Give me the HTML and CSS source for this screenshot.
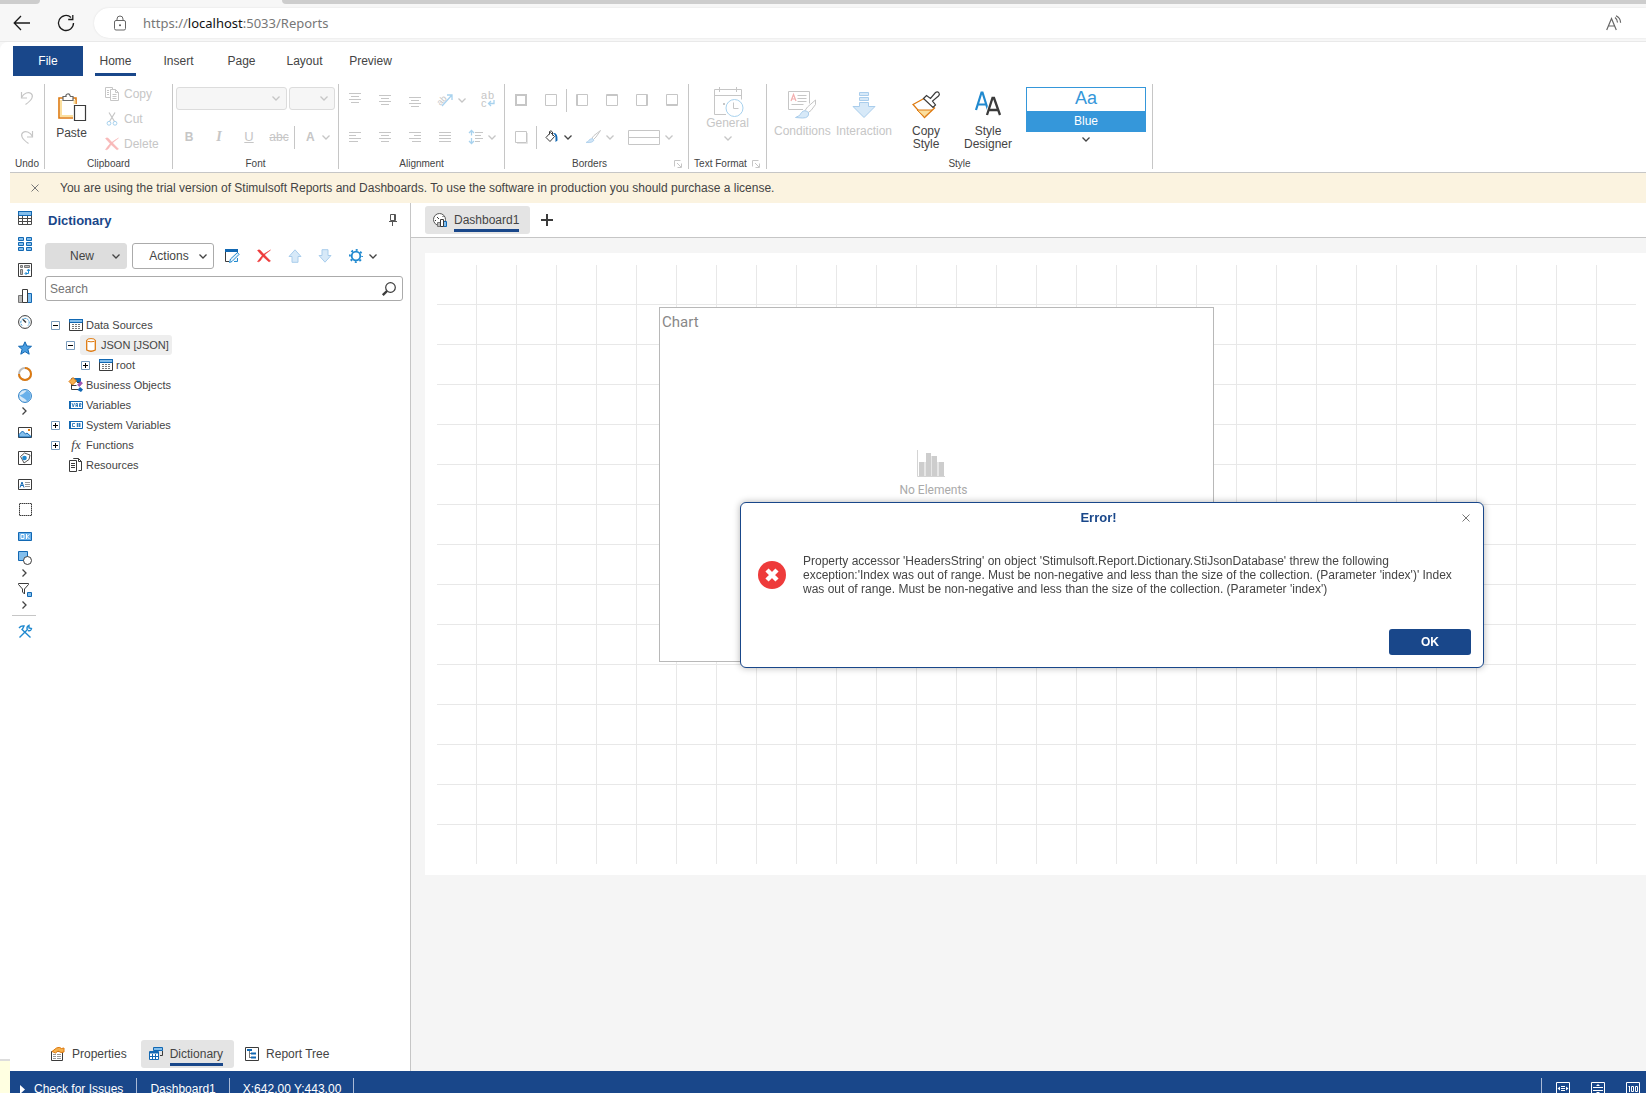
FILE: index.html
```html
<!DOCTYPE html>
<html lang="en">
<head>
<meta charset="utf-8">
<title>Reports</title>
<link rel="stylesheet" href="styles.css">
</head>
<body>
<svg class="sprite" aria-hidden="true">
  <symbol id="chev" viewBox="0 0 8 5"><path d="M.5.5 4 4 7.5.5" fill="none" stroke="currentColor" stroke-width="1.3"/></symbol>
  <symbol id="chev-r" viewBox="0 0 5 8"><path d="M.5.5 4 4 .5 7.5" fill="none" stroke="currentColor" stroke-width="1.3"/></symbol>
  <symbol id="launch" viewBox="0 0 8 8"><path d="M.5 6.500V.5h6M3 3l4 4M7.500 3.500v4h-4" fill="none" stroke="currentColor"/></symbol>
  <symbol id="lines-c" viewBox="0 0 14 14"><path d="M1 2.500h12M3 5.500h8M1 8.500h12M3 11.500h8" stroke="currentColor"/></symbol>
  <symbol id="lines-l" viewBox="0 0 14 14"><path d="M1 2.500h12M1 5.500h7M1 8.500h12M1 11.500h9" stroke="currentColor"/></symbol>
  <symbol id="lines-r" viewBox="0 0 14 14"><path d="M1 2.500h12M6 5.500h7M1 8.500h12M4 11.500h9" stroke="currentColor"/></symbol>
  <symbol id="lines-j" viewBox="0 0 14 14"><path d="M1 2.500h12M1 5.500h12M1 8.500h12M1 11.500h12" stroke="currentColor"/></symbol>
  <symbol id="minus" viewBox="0 0 9 9"><path d="M.5.5h8v8h-8z" fill="#fff" stroke="#7a9cbd"/><path d="M2 4.500h5" stroke="#000"/></symbol>
  <symbol id="plus" viewBox="0 0 9 9"><path d="M.5.5h8v8h-8z" fill="#fff" stroke="#7a9cbd"/><path d="M2 4.500h5M4.500 2v5" stroke="#000"/></symbol>
  <symbol id="table" viewBox="0 0 14 12"><path d="M0 0h14v4H0z" fill="#1268b3"/><path d="M1 1h12v2H1z" fill="#83beec"/><path d="M.5 3.500v8h13v-8" fill="none" stroke="#3b3b3b"/><path d="M3 5.500h8M3 7.500h8M3 9.500h8" stroke="#777" stroke-dasharray="2 1"/></symbol>
  <symbol id="cross" viewBox="0 0 14 14"><path d="M.5 1.500Q2 0 3.500 1.500 6 4.500 13.500 12q-1 1-2 .5Q5 7 .5 1.500z" fill="currentColor" stroke="currentColor" stroke-width=".5"/><path d="M13.500 1Q7 5 3.500 11.500 1.500 13.500.5 12.500 5 5 13.500 1z" fill="currentColor" stroke="currentColor" stroke-width=".5"/></symbol>
  <symbol id="arrow" viewBox="0 0 14 14"><path d="M7 .8 13 7.500h-3v5.800H4V7.500H1z" fill="#d7e9f8" stroke="#a9cdec"/></symbol>
</svg>

<header class="browser">
  <div class="tabstrip"><i class="tab-left"></i><i class="tab-right"></i></div>
  <div class="navbar">
    <button class="nav-btn" aria-label="Back"><svg width="18" height="16" viewBox="0 0 18 16"><path d="M17 8H1.500M8 1 1.200 8 8 15" fill="none" stroke="#1b1b1b" stroke-width="1.300"/></svg></button>
    <button class="nav-btn" aria-label="Refresh"><svg width="18" height="18" viewBox="0 0 18 18"><path d="M16.500 9A7.500 7.500 0 1 1 14 3.400M15.800 1v4.500h-4.600" fill="none" stroke="#1b1b1b" stroke-width="1.300"/></svg></button>
    <div class="address">
      <svg width="14" height="16" viewBox="0 0 14 16"><rect x="1.500" y="5.500" width="11" height="9.500" rx="1.500" fill="none" stroke="#666"/><path d="M4 5.500V4a3 3 0 0 1 6 0v1.500" fill="none" stroke="#666"/><circle cx="7" cy="10.300" r="1" fill="#555"/></svg>
      <span class="url">https://<b>localhost</b>:5033/Reports</span>
      <button class="read" aria-label="Read aloud"><svg width="16" height="16" viewBox="0 0 16 16"><path d="M.7 15 5.500 3.500 10.300 15M2.300 11h6.500M9 2.500a6 6 0 0 1 2.500 5M10 .7a8 8 0 0 1 4.600 7" fill="none" stroke="#666" stroke-width="1.200"/></svg></button>
    </div>
  </div>
</header>

<div class="frame">
<div class="gutter"><i></i></div>
<div class="app">

<nav class="menu">
  <button class="file">File</button>
  <button class="menu-tab on"><span>Home</span></button>
  <button class="menu-tab"><span>Insert</span></button>
  <button class="menu-tab"><span>Page</span></button>
  <button class="menu-tab"><span>Layout</span></button>
  <button class="menu-tab"><span>Preview</span></button>
</nav>

<div class="ribbon">
  <section class="group g-undo">
    <div class="rows">
      <div class="row mid"><button class="off" aria-label="Undo"><svg width="14" height="16" viewBox="0 0 14 16"><path d="M1.500 2v6h5.500M1.500 7.500C4 3 8.500 1.500 11 3.500s2 6-5.500 11" fill="none" stroke="currentColor" stroke-width="1.200"/></svg></button></div>
      <div class="row mid"><button class="off" aria-label="Redo"><svg width="14" height="16" viewBox="0 0 14 16"><path d="M12.500 2v6H7M12.500 7.500C10 3 5.500 1.500 3 3.500s-2 6 5.500 11" fill="none" stroke="currentColor" stroke-width="1.200"/></svg></button></div>
    </div>
    <h2>Undo</h2>
  </section>

  <section class="group g-clip">
    <div class="clip">
      <button class="big paste"><svg width="28" height="28" viewBox="0 0 28 28"><path d="M1 5h17v20H1z" fill="#fff" stroke="#de7a10" stroke-width="1.600"/><path d="M3 7v16H15M16.500 7v4" fill="none" stroke="#fbdf9e" stroke-width="2"/><path d="M5 7.500V3.500h3a2 2 0 0 1 4-1l.5 1H15v4z" fill="#fff" stroke="#666" stroke-width="1.200"/><path d="M15 11h13v17H15z" fill="#fff"/><path d="M16.500 12.500h11v15h-11z" fill="#fff" stroke="#3b3b3b" stroke-width="1.200"/></svg>Paste</button>
      <div class="clip-list">
        <button class="line off"><svg width="14" height="14" viewBox="0 0 14 14"><path d="M5.500 10.500h-5V.5h7v2M5.500 2.500h5l3 3v8h-8zM10.500 2.500v3h3M2 3.500h2M2 5.500h2M2 7.500h2M7.500 7.500h4M7.500 9.500h4M7.500 11.500h4" fill="none" stroke="currentColor"/></svg>Copy</button>
        <button class="line off"><svg width="14" height="14" viewBox="0 0 14 14"><path d="M4 .5 9.500 9.500M10 .5 4.500 9.500" stroke="currentColor" fill="none" stroke-width="1.200"/><circle cx="4" cy="11.300" r="1.900" fill="none" stroke="#a8d2ee"/><circle cx="10" cy="11.300" r="1.900" fill="none" stroke="#a8d2ee"/></svg>Cut</button>
        <button class="line off"><svg class="pink" width="14" height="14"><use href="#cross"/></svg>Delete</button>
      </div>
    </div>
    <h2>Clipboard</h2>
  </section>

  <section class="group g-font">
    <div class="rows">
      <div class="row combos"><button class="combo wide off" aria-label="Font name"><svg width="8" height="5"><use href="#chev"/></svg></button><button class="combo off" aria-label="Font size"><svg width="8" height="5"><use href="#chev"/></svg></button></div>
      <div class="row cells"><button class="cell off fb">B</button><button class="cell off fi">I</button><button class="cell off fu">U</button><button class="cell off fs">abc</button><i class="vline"></i><button class="duo off fa">A<svg width="8" height="5"><use href="#chev"/></svg></button></div>
    </div>
    <h2>Font</h2>
  </section>

  <section class="group g-align">
    <div class="rows">
      <div class="row cells">
        <button class="cell off up" aria-label="Align top"><svg width="14" height="14"><use href="#lines-c"/></svg></button>
        <button class="cell off" aria-label="Align middle"><svg width="14" height="14"><use href="#lines-c"/></svg></button>
        <button class="cell off down" aria-label="Align bottom"><svg width="14" height="14"><use href="#lines-c"/></svg></button>
        <button class="duo off" aria-label="Angle"><svg width="15" height="14" viewBox="0 0 15 14"><path d="M4 13 13.500 2.500M9 2h5v5" fill="none" stroke="#a8d2ee" stroke-width="1.300"/><text x="-1" y="11" transform="rotate(-45 3 8)" font-size="9" fill="currentColor">ab</text></svg><svg width="8" height="5"><use href="#chev"/></svg></button>
        <button class="cell off wrap" aria-label="Wrap text"><svg width="14" height="16" viewBox="0 0 14 16"><text x="0" y="7" font-size="11" fill="currentColor">a</text><text x="7" y="7" font-size="11" fill="currentColor">b</text><text x="0" y="15" font-size="11" fill="currentColor">c</text><path d="M13 8v3.500H7.500M10 9l-2.500 2.500L10 14" fill="none" stroke="#a8d2ee" stroke-width="1.300"/></svg></button>
      </div>
      <div class="row cells">
        <button class="cell off" aria-label="Left"><svg width="14" height="14"><use href="#lines-l"/></svg></button>
        <button class="cell off" aria-label="Center"><svg width="14" height="14"><use href="#lines-c"/></svg></button>
        <button class="cell off" aria-label="Right"><svg width="14" height="14"><use href="#lines-r"/></svg></button>
        <button class="cell off" aria-label="Justify"><svg width="14" height="14"><use href="#lines-j"/></svg></button>
        <button class="duo off" aria-label="Line spacing"><svg width="15" height="14" viewBox="0 0 15 14"><path d="M3.500 1v4.500M3.500 8v5M1 3l2.500-2.500L6 3M1 11l2.500 2.500L6 11" fill="none" stroke="#a8d2ee" stroke-width="1.300"/><path d="M7 2.500h8M7 5.500h6M7 8.500h8M7 11.500h5" stroke="currentColor"/></svg><svg width="8" height="5"><use href="#chev"/></svg></button>
      </div>
    </div>
    <h2>Alignment</h2>
  </section>

  <section class="group g-border">
    <div class="rows">
      <div class="row cells">
        <button class="cell off" aria-label="All borders"><svg width="12" height="12"><path d="M1 1h10v10H1z" fill="none" stroke="currentColor" stroke-width="2"/></svg></button>
        <button class="cell off" aria-label="No borders"><svg width="12" height="12"><path d="M.5.5h11v11H.5z" fill="none" stroke="currentColor"/></svg></button>
        <i class="vline"></i>
        <button class="cell off" aria-label="Left border"><svg width="12" height="12"><path d="M.5.5h11v11H.5zM1.500 0v12" fill="none" stroke="currentColor"/></svg></button>
        <button class="cell off" aria-label="Top border"><svg width="12" height="12"><path d="M.5.5h11v11H.5zM0 1.500h12" fill="none" stroke="currentColor"/></svg></button>
        <button class="cell off" aria-label="Right border"><svg width="12" height="12"><path d="M.5.5h11v11H.5zM10.500 0v12" fill="none" stroke="currentColor"/></svg></button>
        <button class="cell off" aria-label="Bottom border"><svg width="12" height="12"><path d="M.5.5h11v11H.5zM0 10.500h12" fill="none" stroke="currentColor"/></svg></button>
      </div>
      <div class="row cells">
        <button class="cell off" aria-label="Shadow"><svg width="12" height="12"><path d="M2 12.500h10.500V2" fill="none" stroke="#e4e4e4"/><path d="M.5.5h11v11H.5z" fill="none" stroke="currentColor"/></svg></button>
        <i class="vline"></i>
        <button class="duo" aria-label="Fill"><svg width="14" height="14" viewBox="0 0 14 14"><path d="M5.500 2.500 9.500 6.500 5 11.500 1 7.500zM4.500 4.500V1.500L6 .8 7.500 2v3.500" fill="none" stroke="#3b3b3b"/><path d="M8 3q5-1 4.500 7.500L10.500 12V7q0-2-2.500-4z" fill="#1268b3"/></svg><svg width="8" height="5"><use href="#chev"/></svg></button>
        <button class="duo off" aria-label="Border color"><svg width="15" height="14" viewBox="0 0 15 14"><path d="M14.500.5 8 5.500 6 8l1.500 1.500L10 7z" fill="none" stroke="currentColor"/><path d="M0 12.500q3-1 3.500-3 3-2 4.500.5-1 3-8 2.500z" fill="#d0e5f7" stroke="#b4d4ee"/></svg><svg width="8" height="5"><use href="#chev"/></svg></button>
        <button class="duo off" aria-label="Border style"><svg width="32" height="15"><path d="M.5.5h31v14H.5z" fill="none" stroke="currentColor"/><path d="M0 7.500h32" stroke="currentColor"/></svg><svg width="8" height="5"><use href="#chev"/></svg></button>
      </div>
    </div>
    <h2><span>Borders</span><svg class="faint" width="8" height="8"><use href="#launch"/></svg></h2>
  </section>

  <section class="group g-format">
    <button class="big format off"><svg width="30" height="30" viewBox="0 0 30 30"><path d="M13 27.500H1.500v-25H28.500v10M1.500 8.500h27M6.500 0v5M23.500 0v5" fill="none" stroke="currentColor"/><path d="M10 16h2v2h-2z" fill="currentColor"/><circle cx="21.500" cy="21" r="8.500" fill="#fff" stroke="#a8d2ee"/><path d="M20.500 15.500v6h5" fill="none" stroke="currentColor"/></svg>General<svg width="8" height="5"><use href="#chev"/></svg></button>
    <h2><span>Text Format</span><svg class="faint" width="8" height="8"><use href="#launch"/></svg></h2>
  </section>

  <section class="group g-style">
    <div class="styles">
      <button class="big off"><svg width="28" height="28" viewBox="0 0 28 28"><path d="M15 18.500H.5V.5h21v12M9.500 4.500h9M9.500 7.500h9M9.500 10.500h9M3.500 13.500h12" fill="none" stroke="currentColor"/><path d="m3 10 2.500-6.500L8 10M4 8h3" fill="none" stroke="#f3aeae" stroke-width="1.200"/><path d="m27.500 9-8 7-2.500 3.500 2.500 2.500 3.500-2.500 4.500-6z" fill="#fff" stroke="currentColor"/><path d="M7.500 26.500q5-1.500 6-5 3-3.500 7 0 1 5.500-6 5.500z" fill="#d7e9f8" stroke="#a9cdec"/></svg><span>Conditions</span></button>
      <button class="big off"><svg width="28" height="28" viewBox="0 0 28 28"><path d="M9.500 1.500h9v3h-9zM9.500 6.500h9v3h-9zM9.500 11.500h9v4H25L14 26.500 3 15.500h6.500z" fill="#d7e9f8" stroke="#a9cdec"/></svg><span>Interaction</span></button>
      <button class="big"><svg width="28" height="28" viewBox="0 0 28 28"><path d="m1 13.500 11-6L22.500 17 12.500 26.500z" fill="#fff" stroke="#de7a10" stroke-width="1.300"/><path d="M5 19h15l-7.500 7z" fill="#fbdf9e" stroke="#de7a10"/><path d="m11.500 7.500 3-3 4 3 5-6q2-1.500 3.500.5 1 1.500-.5 3l-6 5 3 4-2.500 2.500z" fill="#fff" stroke="#3b3b3b" stroke-width="1.200"/></svg><span>Copy Style</span></button>
      <button class="big"><svg width="28" height="28" viewBox="0 0 28 28"><path d="M2 19 7.500 1.500h1L14 19M4 13.500h8.500" fill="none" stroke="#2089cf" stroke-width="2.200"/><path d="m13 24 5.500-17h1.500L26 24M15 19h9" fill="none" stroke="#fff" stroke-width="4"/><path d="m13 24 5.500-17h1.500L26 24M15 19h9" fill="none" stroke="#3b3b3b" stroke-width="2.300"/></svg><span>Style Designer</span></button>
      <button class="gallery"><span class="sample">Aa</span><span class="sample-name">Blue</span><svg width="8" height="5"><use href="#chev"/></svg></button>
    </div>
    <h2 class="style-title">Style</h2>
  </section>
</div>

<div class="trial">
  <button aria-label="Dismiss"><svg width="8" height="8"><path d="m.5.5 7 7M7.500.5l-7 7" stroke="#777"/></svg></button>
  <p>You are using the trial version of Stimulsoft Reports and Dashboards. To use the software in production you should purchase a license.</p>
</div>

<main class="work">
  <aside class="tools">
    <button aria-label="Table"><svg width="14" height="14"><path d="M0 0h14v5H0z" fill="#1268b3"/><path d="M1 1h12v3H1z" fill="#83beec"/><path d="M.5 4.500v9h13v-9M0 7.500h14M0 10.500h14M4.500 5v9M9.500 5v9" fill="none" stroke="#4a4a4a"/></svg></button>
    <button aria-label="Cards"><svg width="14" height="14"><path d="M.5.500h5v3h-5zM8.500.5h5v3h-5zM.5 5.500h5v3h-5zM8.500 5.500h5v3h-5zM.5 10.500h5v3h-5zM8.500 10.500h5v3h-5z" fill="#83beec" stroke="#1268b3"/></svg></button>
    <button aria-label="Pivot"><svg width="14" height="14"><path d="M.5.5h13v13H.5z" fill="#fff" stroke="#3b3b3b"/><path d="M2.500 2.500h2v2h-2zM6.500 2.500h5v2h-5zM2.500 6.500h2v5h-2z" fill="#bbb" stroke="#777"/><path d="M7.500 10.500h3v-4M9 8l1.500-2L12 8M8.500 9l-1.500 1.500L8.500 12" fill="none" stroke="#2089cf"/></svg></button>
    <button aria-label="Chart"><svg width="14" height="14"><path d="M.5 6.500h4v7h-4z" fill="#bbb" stroke="#777"/><path d="M9.500 4.500h4v9h-4z" fill="#83beec" stroke="#1268b3"/><path d="M4.500.5h5v13h-5z" fill="#fff" stroke="#3b3b3b"/></svg></button>
    <button aria-label="Gauge"><svg width="14" height="14"><circle cx="7" cy="7" r="6.400" fill="#fff" stroke="#3b3b3b"/><path d="M4 10.500A4.200 4.200 0 1 1 10 10.500" fill="none" stroke="#2089cf" stroke-dasharray="2 1"/><path d="m5 4.500 3 3" stroke="#3b3b3b" stroke-width="1.500"/></svg></button>
    <button aria-label="Indicator"><svg width="14" height="14"><path d="m7 .8 1.900 4.200 4.600.3-3.600 3 1.300 4.900L7 10.600l-4.200 2.600 1.300-4.900-3.600-3L5.100 5z" fill="#4a9de0" stroke="#1268b3"/></svg></button>
    <button aria-label="Progress"><svg width="14" height="14"><circle cx="7" cy="7" r="6" fill="none" stroke="#bbb" stroke-width="2"/><path d="M7 1a6 6 0 1 1-6 6" fill="none" stroke="#de7a10" stroke-width="2"/></svg></button>
    <button class="short" aria-label="Map"><svg width="14" height="14"><circle cx="7" cy="7" r="6.400" fill="#d7e9f8" stroke="#2079c4"/><path d="M1.500 6.500 5 5l4-3.500 3.500 3v5L9.500 12.500 7 10z" fill="#69b0ea"/></svg></button>
    <button class="more" aria-label="More maps"><svg width="5" height="8"><use href="#chev-r"/></svg></button>
    <button aria-label="Image"><svg width="14" height="11"><path d="M.5.5h13v10H.5z" fill="#fff" stroke="#3b3b3b"/><path d="M1 7.500 4.500 4l3 3L9 6l4 3.500v.5H1z" fill="#83beec" stroke="#1268b3"/><path d="M10 2h2v2h-2z" fill="#de7a10"/></svg></button>
    <button aria-label="Region"><svg width="14" height="14"><path d="M.5.5h13v13H.5z" fill="#fff" stroke="#3b3b3b"/><path d="m2.500 5.500 4-3.500 5.500 2-1 4.500-5 3.500-1.500-3z" fill="none" stroke="#555"/><circle cx="6.500" cy="7" r="2.300" fill="#2089cf"/></svg></button>
    <button aria-label="Text"><svg width="14" height="11"><path d="M.5.5h13v10H.5z" fill="#fff" stroke="#3b3b3b"/><path d="M2 8.500 4 3l2 5.500M3 6.500h2" fill="none" stroke="#1268b3"/><path d="M7 3.500h5M7 5.500h5M7 7.500h5" stroke="#999"/></svg></button>
    <button aria-label="Panel"><svg width="14" height="14"><path d="M1.500.5h12v12h-12z" fill="none" stroke="#3b3b3b" stroke-dasharray="1.500 .5"/></svg></button>
    <button aria-label="Button"><svg width="14" height="9"><path d="M.5.5h13v8H.5z" fill="#69b0ea" stroke="#1268b3"/><path d="M3 2.500h3v4H3zM8.500 2v5M11.500 2.500l-2.500 2 2.500 2.500" fill="none" stroke="#fff"/></svg></button>
    <button class="short" aria-label="Shape"><svg width="14" height="14"><path d="M.5.5h9v9h-9z" fill="#83beec" stroke="#1268b3"/><circle cx="9.500" cy="9.500" r="4" fill="#fff" stroke="#3b3b3b"/></svg></button>
    <button class="more" aria-label="More shapes"><svg width="5" height="8"><use href="#chev-r"/></svg></button>
    <button class="short" aria-label="Filter"><svg width="14" height="14"><path d="M.5.5h10v1l-4 4.500v5l-2-2V6l-4-4.500z" fill="#fff" stroke="#3b3b3b"/><path d="M9.500 9.500h4v4h-4z" fill="#83beec" stroke="#1268b3"/></svg></button>
    <button class="more" aria-label="More filters"><svg width="5" height="8"><use href="#chev-r"/></svg></button>
    <hr>
    <button aria-label="Setup"><svg width="14" height="14" viewBox="0 0 14 14"><path d="m3.500 4 9 8.500M1 3q2-2.500 5-2L4.500 4" fill="none" stroke="#2089cf" stroke-width="1.400"/><path d="m1.500 12.500 8-8M9.500 5q-1.500-3 1.500-4.500v2.500l2.500.5q-.5 3-3.500 2" fill="none" stroke="#2089cf" stroke-width="1.400"/></svg></button>
  </aside>

  <section class="panel">
    <div class="panel-head"><h1>Dictionary</h1><button aria-label="Pin"><svg width="8" height="13"><path d="M1.500.5h5v6h-5zM5.500 1v5M0 7.500h8M3.500 8v4" fill="none" stroke="#555"/></svg></button></div>
    <div class="toolbar">
      <button class="drop filled"><span>New</span><svg width="8" height="5"><use href="#chev"/></svg></button>
      <button class="drop"><span>Actions</span><svg width="8" height="5"><use href="#chev"/></svg></button>
      <button class="tool" aria-label="Edit"><svg width="15" height="14" viewBox="0 0 15 14"><path d="M0 0h13v3H0z" fill="#1268b3"/><path d="M.5 3v9.500H4M12.500 3v1" fill="none" stroke="#3b3b3b"/><path d="m4.500 13.500 1-3.500 7-6.500 1.500 2-7 7zM9 12.500h3.500V9" fill="#e4f1fb" stroke="#2089cf"/></svg></button>
      <button class="tool red" aria-label="Delete"><svg width="14" height="14"><use href="#cross"/></svg></button>
      <button class="tool" aria-label="Move up"><svg width="14" height="14"><use href="#arrow"/></svg></button>
      <button class="tool flip" aria-label="Move down"><svg width="14" height="14"><use href="#arrow"/></svg></button>
      <button class="gear" aria-label="Settings"><svg width="14" height="14"><circle cx="7" cy="7" r="4.300" fill="none" stroke="#2089cf" stroke-width="1.800"/><circle cx="7" cy="7" r="6.100" fill="none" stroke="#2089cf" stroke-width="1.800" stroke-dasharray="2 2.790" stroke-dashoffset="1"/></svg><svg width="8" height="5"><use href="#chev"/></svg></button>
    </div>
    <label class="search"><input type="text" placeholder="Search" aria-label="Search"><svg width="14" height="14"><circle cx="8.500" cy="5.500" r="4.800" fill="none" stroke="#3b3b3b" stroke-width="1.200"/><path d="M5 9 .8 13.200" stroke="#3b3b3b" stroke-width="2.400"/></svg></label>
    <ul class="tree">
      <li><svg width="9" height="9"><use href="#minus"/></svg><a href="#"><i><svg width="14" height="12"><use href="#table"/></svg></i>Data Sources</a></li>
      <li class="l2"><svg width="9" height="9"><use href="#minus"/></svg><a href="#" class="sel"><i><svg width="10" height="14"><path d="M.7 2v10q4.300 2.500 8.600 0V2" fill="#fff" stroke="#de7a10" stroke-width="1.300"/><ellipse cx="5" cy="2.200" rx="4.300" ry="1.600" fill="#fff" stroke="#de7a10"/></svg></i>JSON [JSON]</a></li>
      <li class="l3"><svg width="9" height="9"><use href="#plus"/></svg><a href="#"><i><svg width="14" height="12"><use href="#table"/></svg></i>root</a></li>
      <li><b></b><a href="#"><i><svg width="14" height="14"><path d="M2.500.5h9v3h-9z" fill="#1268b3" stroke="#1268b3"/><path d="M2.500 6v5.500h7M2.500 7.500h5M8 4.500h4" fill="none" stroke="#3b3b3b"/><path d="M4-.5 7.500 3 3.500 7 0 3.500z" fill="#f5b04d" stroke="#de7a10"/><path d="M11.500 3.500 13.500 5 10.500 8.500 8.500 7z" fill="#a056b5" stroke="#8a3fa0" stroke-width=".6"/><path d="m11 9 3 2.500-2 2.500-3.500-2z" fill="#1268b3"/></svg></i>Business Objects</a></li>
      <li><b></b><a href="#"><i><svg width="14" height="8"><path d="M.5.5h13v7H.5z" fill="#fff" stroke="#1268b3"/><path d="M0 0h2v8H0z" fill="#1268b3"/><path d="m3 2 1.200 4L5.500 2M7 6V2.500h1.500V6M7 4.500h1.500M10.500 6V2.500H12V4h-1.500L12 6" fill="none" stroke="#1268b3" stroke-width=".8"/></svg></i>Variables</a></li>
      <li><svg width="9" height="9"><use href="#plus"/></svg><a href="#"><i><svg width="14" height="8"><path d="M.5.5h13v7H.5z" fill="#fff" stroke="#1268b3"/><path d="M0 0h2v8H0z" fill="#1268b3"/><path d="M6 2.500H3.500v3H6M8.500 2v4M10.500 2v4M7.500 3h4.500M7.500 5h4.500" fill="none" stroke="#1268b3" stroke-width=".8"/></svg></i>System Variables</a></li>
      <li><svg width="9" height="9"><use href="#plus"/></svg><a href="#"><i class="fx">fx</i>Functions</a></li>
      <li><b></b><a href="#"><i><svg width="14" height="14"><path d="M4.500 1V.5h5l3 3v9h-3M9.500.5v3h3M.5 2.500h7v11h-7zM2 5.500h4M2 7.500h4M2 9.500h4" fill="none" stroke="#3b3b3b"/></svg></i>Resources</a></li>
    </ul>
    <nav class="panel-tabs">
      <button><svg width="14" height="14"><path d="M.5 4.500h11v9H.5z" fill="#fff" stroke="#3b3b3b"/><path d="M2 7.500h3M6 7.500h4M2 9.500h3M6 9.500h4M2 11.500h3M6 11.500h4" stroke="#999"/><path d="M1 4.500 5.500 1q3-1.500 5 .5l2.500-.5v4l-3 .5-3-1.500L4.500 6z" fill="#f5b04d" stroke="#de7a10"/></svg><span>Properties</span></button>
      <button class="on"><svg width="14" height="14"><path d="M4.500.5h9v3h-9z" fill="#83beec" stroke="#1268b3"/><path d="M13.500 4v4.500H11" fill="none" stroke="#3b3b3b"/><path d="M.5 4.500h9v8h-9z" fill="#fff" stroke="#1268b3"/><path d="M1 5h8v1.500H1z" fill="#1268b3"/><path d="M1 9.500h8M3.500 7v5M6.500 7v5" stroke="#1268b3"/></svg><span>Dictionary</span></button>
      <button><svg width="14" height="14"><path d="M.5.5h13v13H.5z" fill="#fff" stroke="#3b3b3b"/><path d="M2 3h5M6 6.500h5M6 10.500h5" stroke="#1268b3" stroke-width="2"/><path d="M4.500 4v6.500M4 6.500h2M4 10.500h2" stroke="#777"/></svg><span>Report Tree</span></button>
    </nav>
  </section>

  <section class="stage">
    <nav class="doc-tabs">
      <button class="doc on"><svg width="14" height="14"><circle cx="6.500" cy="6.500" r="6" fill="#fff" stroke="#555"/><path d="m4 4 2 2M2.500 7v1M9.500 4l1-1" stroke="#3b3b3b"/><path d="M4.500 9.500h3v4h-3z" fill="#bbb" stroke="#777"/><path d="M10.500 8.500h3v5h-3z" fill="#83beec" stroke="#1268b3"/><path d="M7.500 6.500h3v7h-3z" fill="#fff" stroke="#3b3b3b"/></svg><span>Dashboard1</span></button>
      <button class="add" aria-label="Add page"><svg width="12" height="12"><path d="M6 0v12M0 6h12" stroke="#3b3b3b" stroke-width="2"/></svg></button>
    </nav>
    <div class="canvas">
      <div class="grid">
        <article class="chart">
          <h3>Chart</h3>
          <div class="empty"><svg width="28" height="27"><path d="M.5 0v26.500H28" fill="none" stroke="#d4d4d4"/><path d="M2 12h5v14H2zM9 3h5v23H9zM15 6h5v20h-5zM22 12h5v14h-5z" fill="#cdcdcd"/><path d="M7 12h2v14H7zM14 6h1v20h-1zM20 12h2v14h-2z" fill="#e6e6e6"/></svg>No Elements</div>
        </article>
      </div>
    </div>
  </section>
</main>

<footer class="status">
  <button><svg width="5" height="9"><path d="m0 0 5 4.500L0 9z" fill="#fff"/></svg>Check for Issues</button>
  <span>Dashboard1</span>
  <span>X:642.00 Y:443.00</span>
  <div class="zooms">
    <button aria-label="Page width"><svg width="14" height="14"><path d="M.5.5h13v13H.5zM5 4.500h4M5 6.500h4M5 8.500h4" fill="none" stroke="#fff"/><path d="M4 4.500v4l-2.500-2zM10 4.500v4l2.500-2z" fill="#fff"/></svg></button>
    <button aria-label="One page"><svg width="14" height="14"><path d="M.5.5h13v13H.5zM2 5.500h10M2 8.500h10" fill="none" stroke="#fff"/><path d="M5 4h4L7 2zM5 10h4l-2 2z" fill="#fff"/></svg></button>
    <button aria-label="100%"><svg width="14" height="14"><path d="M.5.5h13v13H.5zM3.500 4v6M2.500 4.500h1M5.500 4.500h2v5h-2zM9.500 4.500h2v5h-2z" fill="none" stroke="#fff"/></svg></button>
  </div>
</footer>
</div>
</div>

<div class="dialog" role="dialog" aria-labelledby="dialog-title">
  <div class="dialog-head"><h2 id="dialog-title">Error!</h2><button aria-label="Close"><svg width="8" height="8"><path d="m.5.5 7 7M7.500.5l-7 7" stroke="#777"/></svg></button></div>
  <div class="dialog-body">
    <svg width="28" height="28"><circle cx="14" cy="14" r="14" fill="#ee3b3b"/><path d="m9 9 10 10M19 9 9 19" stroke="#fff" stroke-width="4.500"/></svg>
    <p>Property accessor 'HeadersString' on object 'Stimulsoft.Report.Dictionary.StiJsonDatabase' threw the following exception:'Index was out of range. Must be non-negative and less than the size of the collection. (Parameter 'index')' Index was out of range. Must be non-negative and less than the size of the collection. (Parameter 'index')</p>
  </div>
  <div class="dialog-foot"><button>OK</button></div>
</div>
</body>
</html>
```
FILE: styles.css
```css
* { box-sizing: border-box; }
html, body { height: 100%; }
body {
  margin: 0;
  display: flex;
  flex-direction: column;
  overflow: hidden;
  background: #f7f7f7;
  color: #444;
  font: 12px/14px "Liberation Sans", Arial, sans-serif;
}
h1, h2, h3, p, ul { margin: 0; padding: 0; font: inherit; }
ul { list-style: none; }
button { margin: 0; padding: 0; border: 0; background: none; color: inherit; font: inherit; }
a { color: inherit; text-decoration: none; }
svg { display: block; flex: none; overflow: visible; }
.sprite { position: absolute; width: 0; height: 0; }
.off { color: #c6c6c6; }
.faint { color: #c6c6c6; }

/* browser chrome */
.browser { flex: none; height: 42px; border-bottom: 1px solid #e9e9e9; }
.tabstrip { display: flex; gap: 242px; height: 4px; }
.tabstrip i { background: #cdcdcd; }
.tab-left { width: 40px; border-radius: 0 0 6px 0; }
.tab-right { flex: 1; border-radius: 0 0 0 6px; }
.navbar { display: flex; align-items: center; height: 37px; padding-left: 13px; }
.nav-btn { width: 18px; margin-right: 26px; }
.nav-btn + .nav-btn { margin-right: 19px; }
.address { flex: 1; display: flex; align-items: center; height: 30px; padding-left: 19px; border-radius: 15px 0 0 15px; background: #fff; box-shadow: 0 0 2px #ddd; }
.url { flex: 1; margin-left: 16px; color: #777; font: 13px/20px "Noto Sans", "Open Sans", sans-serif; }
.url b { color: #111; font-weight: 400; }
.read { width: 16px; margin-right: 24px; }

.frame { flex: 1; display: flex; min-height: 0; background: #fff; border-radius: 8px 0 0 0; }
.gutter { flex: none; display: flex; align-items: flex-end; width: 10px; }
.gutter i { width: 10px; height: 34px; border-top: 2px solid #ddd; background: #ffffe1; }
.app { flex: 1; display: flex; flex-direction: column; min-width: 0; }

/* menu */
.menu { flex: none; display: flex; height: 34px; padding: 4px 0 0 3px; }
.file { width: 70px; margin-right: 1px; background: #19478a; color: #fff; }
.menu-tab { min-width: 63px; padding: 0 9px; display: flex; justify-content: center; }
.menu-tab span { height: 30px; padding: 0 4px; line-height: 30px; }
.menu-tab.on span { border-bottom: 3px solid #19478a; }
.menu-tab:last-child { min-width: 69px; }

/* ribbon */
.ribbon { flex: none; display: flex; height: 97px; padding: 8px 0 3px; border-bottom: 1px solid #c6c6c6; }
.group { flex: none; display: flex; flex-direction: column; justify-content: space-between; border-right: 1px solid #c6c6c6; }
.group h2 { display: flex; justify-content: center; align-items: center; font-size: 10px; line-height: 10px; white-space: nowrap; }
.group h2 span { flex: 1; text-align: center; }
.group h2 svg { margin-right: 6px; }
.g-undo { width: 35px; }
.g-clip { width: 128px; }
.g-font, .g-align { width: 166px; }
.g-border { width: 184px; }
.g-format { width: 78px; }
.g-style { width: 386px; }
.rows { display: flex; flex-direction: column; gap: 11px; }
.row { display: flex; align-items: center; height: 28px; }
.mid { justify-content: center; }
.cells { padding-left: 1px; }
.cells:first-child { padding-top: 4px; }
.cell { flex: none; width: 30px; display: flex; justify-content: center; align-items: center; }
.up svg { margin-bottom: 4px; }
.down svg { margin-top: 4px; }
.vline { width: 1px; height: 23px; background: #c6c6c6; }
.duo { display: flex; align-items: center; gap: 5px; padding: 0 0 0 8px; }
.duo + .cell { margin-left: 7px; }
.duo + .duo { padding-left: 14px; }
.clip { display: flex; }
.big { display: flex; flex-direction: column; align-items: center; line-height: 13px; }
.paste { width: 45px; margin-left: 4px; padding-top: 9px; gap: 6px; }
.clip-list { display: flex; flex-direction: column; gap: 5px; margin-left: 11px; }
.line { display: flex; align-items: center; gap: 5px; height: 20px; }
.pink { color: #f8b9b9; }
.combos { gap: 2px; padding-left: 3px; }
.combo { display: flex; align-items: center; justify-content: flex-end; width: 46px; height: 23px; padding-right: 6px; border: 1px solid #dcdcdc; border-radius: 3px; background: #f6f6f6; }
.wide { width: 111px; }
.fb { font-weight: 700; }
.fi { font: italic 700 14px/14px "Liberation Serif", serif; }
.fu { text-decoration: underline; font-size: 13px; }
.fs { text-decoration: line-through; }
.fa { gap: 7px; padding-left: 11px; font-weight: 700; }
.format { padding-top: 3px; }
.format svg:last-child { margin-top: 6px; }
.styles { display: flex; height: 74px; }
.styles .big { width: 62px; padding-top: 7px; gap: 6px; }
.styles .big:first-child { margin-left: 4px; }
.styles .big span { width: 56px; text-align: center; }
.gallery { width: 120px; height: 58px; margin: 3px 0 0 7px; display: flex; flex-direction: column; align-items: center; }
.sample { width: 100%; height: 24px; border: 1px solid #3597da; border-bottom: 0; color: #3597da; font-size: 18px; line-height: 21px; }
.sample-name { width: 100%; height: 21px; margin-bottom: 5px; background: #3597da; color: #fff; line-height: 20px; }

/* trial bar */
.trial { flex: none; display: flex; align-items: center; gap: 21px; height: 30px; padding-left: 21px; background: #fbf3e0; }

/* work area */
.work { flex: 1; display: flex; min-height: 0; }
.tools { flex: none; display: flex; flex-direction: column; width: 30px; padding: 2px 1px 0 0; }
.tools button { display: flex; align-items: center; justify-content: center; height: 26px; }
.tools .short { height: 18px; }
.tools .more { height: 14px; padding-bottom: 3px; }
.tools hr { width: 24px; margin: 2px 0 3px 2px; border: 0; border-top: 1px solid #c6c6c6; }
.panel { flex: none; display: flex; flex-direction: column; width: 371px; padding: 0 7px 3px 5px; border-right: 1px solid #c6c6c6; }
.panel-head { display: flex; align-items: center; justify-content: space-between; height: 35px; padding: 0 6px 0 3px; }
.panel-head h1 { color: #19478a; font-size: 13px; font-weight: 700; }
.toolbar { display: flex; align-items: center; height: 36px; }
.drop { display: flex; align-items: center; width: 82px; height: 26px; margin-right: 5px; padding: 0 6px; border: 1px solid #ababab; border-radius: 3px; }
.drop span { flex: 1; text-align: center; }
.filled { border-color: #ddd; background: #ddd; }
.tool { display: flex; justify-content: center; width: 31px; margin-left: -2px; margin-right: 2px; }
.red { color: #ee3b3b; }
.flip { transform: rotate(180deg); }
.gear { display: flex; align-items: center; gap: 6px; margin-left: 6px; }
.search { display: flex; align-items: center; height: 25px; margin-top: 2px; padding: 0 6px 0 4px; border: 1px solid #ababab; border-radius: 3px; }
.search input { flex: 1; min-width: 0; padding: 0; border: 0; outline: 0; background: none; font: inherit; }
.search input::placeholder { color: #757575; }
.tree { flex: 1; padding: 14px 0 0 6px; font-size: 11px; }
.tree li { display: flex; align-items: center; gap: 5px; height: 20px; }
.tree b { width: 9px; }
.tree .l2 { padding-left: 15px; }
.tree .l3 { padding-left: 30px; }
.tree a { display: flex; align-items: center; gap: 3px; height: 20px; padding: 0 3px 0 4px; border-radius: 3px; }
.tree .sel { background: #eee; }
.tree i { display: flex; justify-content: center; width: 14px; }
.tree .fx { font: italic 13px/14px "Liberation Serif", serif; }
.panel-tabs { display: flex; gap: 3px; margin-left: -2px; }
.panel-tabs button, .doc { display: flex; align-items: center; gap: 7px; height: 28px; padding: 0 11px 0 8px; border-radius: 3px; }
.panel-tabs .on, .doc.on { background: #e4e4e4; }
.on > svg + span { height: 20px; margin-top: 4px; border-bottom: 3px solid #19478a; line-height: 16px; }

.stage { flex: 1; min-width: 0; background: #f5f5f5; }
.doc-tabs { display: flex; align-items: center; height: 35px; padding-left: 14px; border-bottom: 1px solid #c6c6c6; background: #fff; }
.add { margin-left: 11px; }
.canvas { margin: 15px 0 0 14px; padding: 12px 10px 11px 12px; background: #fff; }
.grid {
  position: relative;
  height: 599px;
  background-image: linear-gradient(to right, transparent 39px, #e8e8e8 39px), linear-gradient(transparent 39px, #e8e8e8 39px);
  background-size: 40px 40px;
}
.chart { position: absolute; left: 222px; top: 42px; width: 555px; height: 355px; border: 1px solid #b8b8b8; background: #fff; font-family: Roboto, sans-serif; }
.chart h3 { padding: 4px 0 0 2px; color: #888; font-size: 15px; line-height: 20px; }
.empty { display: flex; flex-direction: column; align-items: center; gap: 6px; padding: 118px 6px 0 0; color: #aaa; }
.empty svg { margin-right: 6px; }

/* status bar */
.status { flex: none; display: flex; height: 22px; padding: 7px 6px 0 10px; overflow: hidden; background: #19478a; color: #fff; line-height: 22px; }
.status > button { display: flex; gap: 9px; align-items: center; height: 22px; padding-right: 13px; }
.status > span { height: 22px; padding: 0 13px; border-left: 1px solid #a9bad6; }
.status > span + span { padding-right: 12px; border-right: 1px solid #a9bad6; }
.zooms { display: flex; gap: 21px; height: 22px; margin-left: auto; padding: 4px 0 0 14px; border-left: 1px solid #a9bad6; }
.zooms button { height: 14px; }

/* message box */
.dialog { position: fixed; left: 740px; top: 502px; width: 744px; border: 1px solid #19478a; border-radius: 6px; background: #fff; box-shadow: 0 0 7px rgba(0, 0, 0, .3); }
.dialog-head { display: flex; align-items: center; height: 30px; padding-right: 13px; }
.dialog-head h2 { flex: 1; padding-right: 6px; color: #19478a; font-size: 13px; font-weight: 700; text-align: center; }
.dialog-body { display: flex; align-items: center; gap: 17px; padding: 21px 20px 0 17px; }
.dialog-foot { display: flex; justify-content: flex-end; padding: 33px 12px 12px; }
.dialog-foot button { width: 82px; height: 26px; border-radius: 3px; background: #19478a; color: #fff; font-weight: 700; }
```
